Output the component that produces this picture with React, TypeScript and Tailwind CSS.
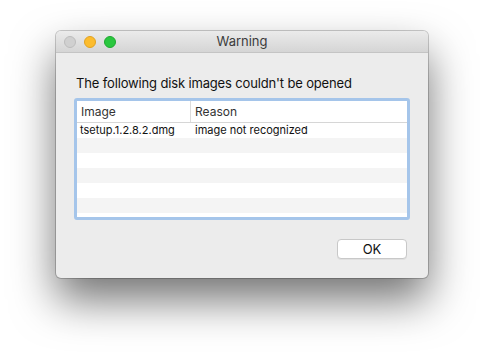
import React from 'react';

const rows = [
  { image: 'tsetup.1.2.8.2.dmg', reason: 'image not recognized' },
  { image: '', reason: '' },
  { image: '', reason: '' },
  { image: '', reason: '' },
  { image: '', reason: '' },
  { image: '', reason: '' },
];

export default function App() {
  return (
    <div
      className="w-[484px] h-[359px] bg-white pt-[31px] pl-[56px] overflow-hidden"
      style={{ fontFamily: 'Inter, "Helvetica Neue", Arial, sans-serif' }}
    >
      <div className="w-[372px] h-[247px] rounded-[5px] bg-[#ececec] flex flex-col shadow-[0_0_0_1px_rgba(0,0,0,0.2),0_22px_44px_rgba(0,0,0,0.55)] overflow-hidden">
        {/* Title bar */}
        <div className="h-[22px] relative flex items-center justify-center bg-gradient-to-b from-[#ebebeb] to-[#d5d5d5] border-b border-[#c4c4c4]">
          <div className="absolute left-[8px] top-[5px] flex gap-[8px]">
            <span className="w-[12px] h-[12px] rounded-full bg-[#d0d0d0] border border-[#bcbcbc]" />
            <span className="w-[12px] h-[12px] rounded-full bg-[#fcbc2e] border border-[#e0a222]" />
            <span className="w-[12px] h-[12px] rounded-full bg-[#2ac73f] border border-[#1fa830]" />
          </div>
          <span className="text-[13px] text-[#3c3c3c] leading-none">Warning</span>
        </div>

        {/* Body */}
        <div className="flex flex-col pl-[18px] pr-[18px] pt-[22px]">
          <p className="text-[13px] text-[#111] leading-[16px] pl-[2px] tracking-[-0.15px]">
            The following disk images couldn't be opened
          </p>

          <div className="mt-[7px] w-[336px] h-[122px] border-[3px] border-[#a5c5ea] rounded-[3px] bg-white flex flex-col overflow-hidden">
            <div className="h-[22px] flex border-b border-[#d6d6d6] text-[12px] text-[#333]">
              <div className="w-[114px] flex items-center pl-[4px] border-r border-[#dcdcdc]">Image</div>
              <div className="flex-1 flex items-center pl-[4px]">Reason</div>
            </div>
            {rows.map((r, i) => (
              <div
                key={i}
                className={`h-[15px] shrink-0 flex items-center text-[11px] text-[#111] ${
                  i % 2 === 1 ? 'bg-[#f4f4f4]' : 'bg-white'
                }`}
              >
                <div className="w-[114px] pl-[3px]">{r.image}</div>
                <div className="flex-1 pl-[4px]">{r.reason}</div>
              </div>
            ))}
          </div>

          <div className="flex justify-end mt-[19px] pr-[3px]">
            <button className="w-[70px] h-[20px] rounded-[4px] bg-white border border-[#c8c8c8] shadow-[0_1px_0_rgba(0,0,0,0.05)] text-[13px] text-[#111] leading-none">
              OK
            </button>
          </div>
        </div>
      </div>
    </div>
  );
}
